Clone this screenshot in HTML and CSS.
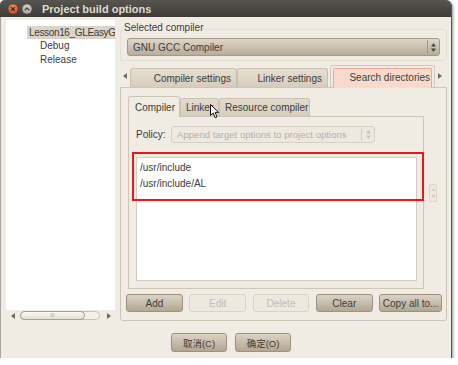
FILE: index.html
```html
<!DOCTYPE html>
<html lang="en">
<head>
    <meta charset="UTF-8">
    <title>Project build options</title>
    <link rel="stylesheet" href="styles.css">
</head>
<body>
    <div class="window">
        <div class="titlebar">
            <svg class="wm-buttons" width="24" height="10" viewBox="0 0 24 10">
                <defs>
                    <radialGradient id="closeGrad" cx="0.5" cy="0.35" r="0.6">
                        <stop offset="0" stop-color="#f7906a"/>
                        <stop offset="1" stop-color="#d9501f"/>
                    </radialGradient>
                    <radialGradient id="minGrad" cx="0.5" cy="0.35" r="0.6">
                        <stop offset="0" stop-color="#dcd9d2"/>
                        <stop offset="1" stop-color="#a9a69f"/>
                    </radialGradient>
                </defs>
                <circle cx="5" cy="5" r="4.8" fill="url(#closeGrad)"/>
                <path d="M3.2 3.2 L6.8 6.8 M6.8 3.2 L3.2 6.8" stroke="#4a2416" stroke-width="1.3"/>
                <circle cx="19" cy="5" r="4.8" fill="url(#minGrad)"/>
                <path d="M16.8 6.2 L19 3.9 L21.2 6.2" stroke="#3c3b37" stroke-width="1.3" fill="none"/>
            </svg>
            <span class="title">Project build options</span>
        </div>

        <div class="main">
            <div class="tree-column">
                <div class="tree">
                    <div class="tree-item selected">Lesson16_GLEasyG</div>
                    <div class="tree-item child">Debug</div>
                    <div class="tree-item child">Release</div>
                </div>
                <div class="hscroll">
                    <span class="tri tri-left"></span>
                    <div class="trough">
                        <div class="thumb">III</div>
                    </div>
                    <span class="tri tri-right"></span>
                </div>
            </div>

            <div class="settings">
                <div class="group">
                    <div class="group-label">Selected compiler</div>
                    <div class="combo">
                        <span class="combo-text">GNU GCC Compiler</span>
                        <span class="combo-arrows">
                            <svg width="5" height="9" viewBox="0 0 5 9"><path d="M0 3.5 L2.5 0 L5 3.5Z M0 5.5 L2.5 9 L5 5.5Z" fill="#4d483f"/></svg>
                        </span>
                    </div>
                </div>

                <div class="tabs">
                    <span class="tab-scroll"><span class="tri tri-left"></span></span>
                    <div class="tab tab-first">Compiler settings</div>
                    <div class="tab tab-linker">Linker settings</div>
                    <div class="tab tab-active"><span class="tab-focus">Search directories</span></div>
                    <span class="tab-scroll"><span class="tri tri-right"></span></span>
                </div>

                <div class="tab-frame">
                    <div class="inner-row">
                        <div class="inner-notebook">
                            <div class="inner-tabs">
                                <div class="itab itab-active">Compiler</div>
                                <div class="itab itab-linker">Linker</div>
                                <div class="itab itab-resource">Resource compiler</div>
                            </div>
                            <div class="inner-frame">
                                <div class="policy-row">
                                    <span class="policy-label">Policy:</span>
                                    <div class="combo combo-disabled">
                                        <span class="combo-text">Append target options to project options</span>
                                        <span class="combo-arrows">
                                            <svg width="5" height="9" viewBox="0 0 5 9"><path d="M0 3.5 L2.5 0 L5 3.5Z M0 5.5 L2.5 9 L5 5.5Z" fill="#c9c2b6"/></svg>
                                        </span>
                                    </div>
                                </div>
                                <div class="dir-list">
                                    <div class="dir-item">/usr/include</div>
                                    <div class="dir-item">/usr/include/AL</div>
                                    <div class="mark"></div>
                                </div>
                            </div>
                        </div>
                        <div class="updown">
                            <svg width="5" height="12" viewBox="0 0 5 12"><path d="M0.5 4 L2.5 1 L4.5 4Z M0.5 8 L2.5 11 L4.5 8Z" fill="#cfc8bc"/></svg>
                        </div>
                    </div>

                    <div class="button-row">
                        <button class="btn">Add</button>
                        <button class="btn" disabled>Edit</button>
                        <button class="btn" disabled>Delete</button>
                        <button class="btn">Clear</button>
                        <button class="btn btn-wide">Copy all to...</button>
                    </div>
                </div>
            </div>
        </div>

        <div class="footer">
            <button class="btn btn-dialog">取消(C)</button>
            <button class="btn btn-dialog">确定(O)</button>
        </div>

        <!-- mouse pointer sitting over the Linker tab -->
        <svg class="pointer" width="10" height="15" viewBox="0 0 10 15">
            <path d="M0.5 0.5 L0.5 11.5 L3.2 9 L5.2 13.8 L7 13 L5.1 8.4 L8.6 8.4 Z" fill="#ffffff" stroke="#111111" stroke-width="1"/>
        </svg>
    </div>
</body>
</html>
```

FILE: styles.css
```css
body {
    margin: 0;
    background: #ffffff;
    font-family: "Liberation Sans", Arial, sans-serif;
    font-size: 10px;
    color: #3c3c3c;
}
.window {
    position: relative;
    width: 451px;
    height: 358px;
    background: #f0ebe3;
    border-radius: 5px 5px 0 0;
    box-shadow: inset 1px 0 0 #aaa59c, 1px 1px 0 #5a5751, 2px 2px 3px rgba(0, 0, 0, 0.45);
}

/* title bar */
.titlebar {
    height: 17px;
    display: flex;
    align-items: center;
    padding-left: 8px;
    background: linear-gradient(#57554f, #3c3b37);
    border-radius: 5px 5px 0 0;
}
.wm-buttons {
    display: block;
}
.title {
    margin-left: 10px;
    font-size: 11px;
    font-weight: bold;
    color: #dfdbd2;
}

.main {
    display: flex;
    padding-top: 3px;
}

/* left tree */
.tree-column {
    margin-left: 6px;
    width: 109px;
}
.tree {
    height: 290px;
    background: #ffffff;
    padding-top: 6px;
    box-sizing: border-box;
    overflow: hidden;
}
.tree-item {
    line-height: 14px;
    white-space: nowrap;
}
.tree-item.selected {
    line-height: 13px;
    margin-left: 21px;
    padding-left: 2px;
    letter-spacing: -0.35px;
    background: #dcd4c6;
}
.tree-item.child {
    padding-left: 34px;
}
.hscroll {
    height: 11px;
    display: flex;
    align-items: center;
    padding-left: 5px;
}
.trough {
    margin-left: 5px;
    width: 80px;
    height: 9px;
    border: 1px solid #c9c1b3;
    border-radius: 5px;
    background: #f4f1ec;
    box-sizing: border-box;
    display: flex;
}
.thumb {
    width: 65px;
    height: 9px;
    margin-top: -1px;
    margin-left: -1px;
    border: 1px solid #a89f90;
    border-radius: 5px;
    box-sizing: border-box;
    background: linear-gradient(#fbf9f6, #e4ded3);
    font-size: 5px;
    line-height: 7px;
    text-align: center;
    color: #a39a8b;
}
.hscroll .tri-right {
    margin-left: 7px;
}

.tri {
    display: inline-block;
    width: 0;
    height: 0;
    border-top: 3px solid transparent;
    border-bottom: 3px solid transparent;
}
.tri-left {
    border-right: 4px solid #6f6a61;
}
.tri-right {
    border-left: 4px solid #6f6a61;
}

/* right side */
.settings {
    margin-left: 5px;
    width: 327px;
}
.group {
    margin-top: 9px;
    border: 1px solid #e4dfd5;
    border-radius: 3px;
    padding: 0 6px 4px 6px;
}
.group-label {
    width: max-content;
    margin-top: -8px;
    margin-left: -4px;
    padding: 0 1px;
    line-height: 12px;
    background: #f0ebe3;
}
.combo {
    margin-top: 4px;
    height: 18px;
    display: flex;
    align-items: center;
    border: 1px solid #a3998a;
    border-radius: 3px;
    box-sizing: border-box;
    background: linear-gradient(#ded6c9, #b9ad99);
}
.combo-text {
    flex: 1;
    padding-left: 5px;
    white-space: nowrap;
    overflow: hidden;
}
.combo-arrows {
    width: 11px;
    height: 14px;
    border-left: 1px solid #a3998a;
    display: flex;
    align-items: center;
    justify-content: center;
}
.combo-arrows svg {
    display: block;
}

/* outer notebook */
.tabs {
    margin-top: 4px;
    height: 22px;
    display: flex;
    align-items: flex-end;
}
.tab-scroll {
    width: 10px;
    height: 22px;
    display: flex;
    align-items: center;
    justify-content: center;
}
.tab {
    height: 19px;
    line-height: 19px;
    border: 1px solid #c9bfae;
    border-bottom: none;
    border-radius: 3px 3px 0 0;
    box-sizing: border-box;
    background: linear-gradient(#e6dfd2, #d5ccbc);
    text-align: right;
    padding-right: 5px;
}
.tab-first {
    width: 107px;
}
.tab-linker {
    width: 91px;
}
.tab-active {
    width: 105px;
    height: 22px;
    margin-left: 2px;
    padding: 2px 2px 0 2px;
    background: #f0ebe3;
    border-color: #d3cabc;
}
.tab-focus {
    display: block;
    height: 20px;
    line-height: 18px;
    background: #f8dacd;
    border: 1px solid #eca797;
    border-bottom: none;
    border-radius: 2px 2px 0 0;
    box-sizing: border-box;
    padding-right: 1px;
}
.tab-frame {
    height: 234px;
    border: 1px solid #cdc5b6;
    border-radius: 0 0 3px 3px;
    box-sizing: border-box;
    padding: 8px 4px 8px 5px;
}

/* inner notebook */
.inner-row {
    display: flex;
    align-items: center;
    padding-left: 2px;
}
.inner-notebook {
    width: 296px;
}
.inner-tabs {
    height: 20px;
    display: flex;
    align-items: flex-end;
}
.itab {
    height: 18px;
    line-height: 18px;
    border: 1px solid #cbc2b2;
    border-bottom: none;
    border-radius: 3px 3px 0 0;
    box-sizing: border-box;
    background: linear-gradient(#e2dbce, #d6cdbd);
    padding-left: 5px;
}
.itab-active {
    position: relative;
    width: 52px;
    height: 21px;
    line-height: 21px;
    margin-bottom: -1px;
    padding-left: 6px;
    background: #f0ebe3;
    border-color: #cdc5b6;
}
.itab-linker {
    width: 39px;
}
.itab-resource {
    width: 91px;
}
.inner-frame {
    height: 173px;
    border: 1px solid #cdc5b6;
    box-sizing: border-box;
    padding: 9px 0 0 7px;
}
.policy-row {
    display: flex;
    align-items: center;
    height: 17px;
}
.policy-label {
    width: 35px;
}
.combo-disabled {
    margin-top: 0;
    width: 204px;
    height: 17px;
    color: #b9b1a3;
    border-color: #d6cfc2;
    background: #ede8e0;
}
.combo-disabled .combo-text {
    font-size: 9.6px;
}
.combo-disabled .combo-arrows {
    width: 12px;
    height: 13px;
    border-left-color: #d6cfc2;
}
.dir-list {
    position: relative;
    margin-top: 14px;
    width: 281px;
    height: 124px;
    background: #ffffff;
    border: 1px solid #d3ccbf;
    box-sizing: border-box;
    padding: 2px 0 0 3px;
}
.dir-item {
    line-height: 16px;
}
.mark {
    position: absolute;
    left: -5px;
    top: -6px;
    width: 292px;
    height: 49px;
    border: 2px solid #e5191b;
    box-sizing: border-box;
}
.updown {
    margin-left: 5px;
    width: 8px;
    height: 18px;
    border: 1px solid #dcd5c9;
    border-radius: 2px;
    box-sizing: border-box;
    background: #ede8e0;
    display: flex;
    align-items: center;
    justify-content: center;
}
.updown svg {
    display: block;
}

/* buttons */
.button-row {
    display: flex;
    gap: 6.5px;
    margin-top: 5px;
}
.btn {
    width: 57px;
    height: 18px;
    padding: 0;
    border: 1px solid #9d9180;
    border-radius: 3px;
    background: linear-gradient(#dbd3c6, #b3a691);
    font-family: "Liberation Sans", Arial, sans-serif;
    font-size: 10px;
    color: #3c3c3c;
}
.btn:disabled {
    border-color: #dad3c7;
    background: #ede8e0;
    color: #c4bcaf;
}
.btn-wide {
    width: 63px;
}
.footer {
    display: flex;
    gap: 8px;
    padding: 12px 0 0 171px;
}
.btn-dialog {
    width: 56px;
    height: 19px;
    font-family: "Liberation Sans", "Noto Sans CJK SC", sans-serif;
    font-size: 9.5px;
}

.pointer {
    position: absolute;
    left: 210px;
    top: 104px;
}
```
